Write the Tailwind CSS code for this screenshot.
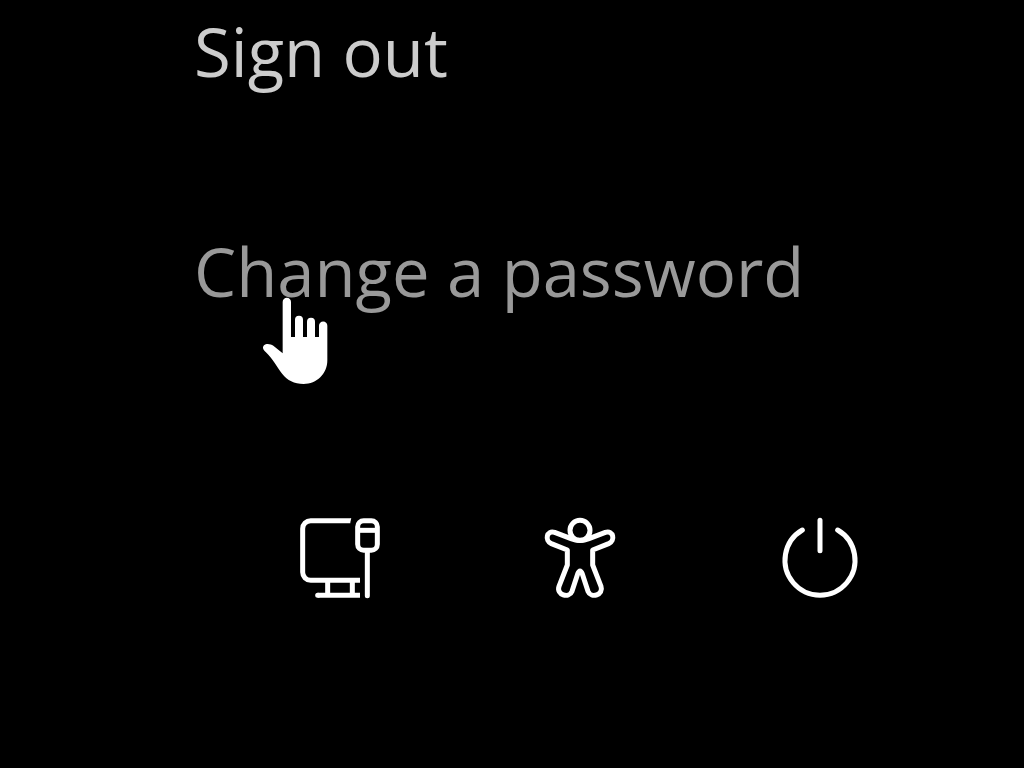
<!DOCTYPE html>
<html lang="en">
<head>
<meta charset="utf-8">
<meta name="viewport" content="width=device-width, initial-scale=1">
<title>Security options</title>
<script src="https://cdn.jsdelivr.net/npm/@tailwindcss/browser@4"></script>
</head>
<body class="min-h-screen bg-black font-['Open_Sans','Noto_Sans',sans-serif] text-white overflow-x-hidden">
<main class="pt-[11px]">
  <nav class="flex flex-col items-start gap-[140px] pl-[194px]" aria-label="Account options">
    <button type="button" class="whitespace-nowrap text-[67px] leading-[80px] text-[#cccccc]">Sign out</button>
    <div class="relative">
      <button type="button" class="whitespace-nowrap text-[67px] leading-[80px] text-[#999999]">Change a password</button>
      <svg class="pointer-events-none absolute left-[56px] top-[59px] h-[100px] w-[90px]" viewBox="0 0 270 300" fill="#fff" aria-hidden="true">
        <path d="M98 36a12.5 12.5 0 0 1 25 0V141H135V89a12 12 0 0 1 24 0V141H171V95a12 12 0 0 1 24 0V141H207V107a12.500 12.500 0 0 1 25 0V211C232 252 200 282 161 282C132 282 112 271 97 252C80 231 70 207 47 186C38 178 37 172 42 166C49 159 62 162 70 167L98 190Z"/>
      </svg>
    </div>
  </nav>
  <div class="mt-[197px] flex gap-[140px] pl-[290px]">
    <button type="button" aria-label="Network" class="shrink-0">
      <svg class="block size-[100px]" viewBox="0 0 300 300" fill="none" stroke="#fff" stroke-width="15" aria-hidden="true">
        <path d="M181 38H62a24 24 0 0 0-24 24V193a24 24 0 0 0 24 24H210M113 217V262M187 217V262M83 262H210"/>
        <path d="M83 262h1M232 128V263" stroke-linecap="round"/>
        <path d="M180 30.500h4l-4 12z" fill="#fff" stroke="none"/>
        <rect x="203" y="38" width="59" height="89" rx="18"/>
        <path d="M203 67H262"/>
      </svg>
    </button>
    <button type="button" aria-label="Accessibility" class="shrink-0">
      <svg class="block size-[100px]" viewBox="0 0 300 300" fill="none" stroke="#fff" stroke-width="15" stroke-linejoin="round" stroke-linecap="round" aria-hidden="true">
        <circle cx="150" cy="67" r="30"/>
        <path d="M123 92L74 73C50 65 43 98 64 107L112 126V171L87 235C78 260 117 273 126 250L143 198Q150 180 157 198L174 250C183 273 222 260 213 235L188 171V126L236 107C257 98 250 65 226 73L177 92Q150 103 123 92Z"/>
      </svg>
    </button>
    <button type="button" aria-label="Power" class="shrink-0">
      <svg class="block size-[100px]" viewBox="0 0 300 300" fill="none" stroke="#fff" stroke-width="15" stroke-linecap="round" aria-hidden="true">
        <path d="M97 66A105 105 0 1 0 203 66M150 37V128"/>
      </svg>
    </button>
  </div>
</main>
</body>
</html>
